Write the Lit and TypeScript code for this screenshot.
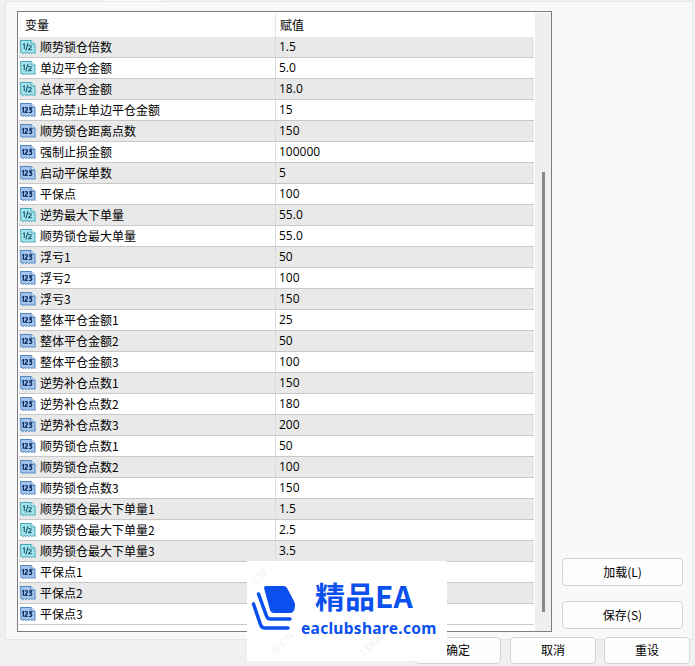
import { LitElement, html, css, svg } from "lit";
import { customElement } from "lit/decorators.js";

type Row = [string, string, "d" | "i"];
const rows: Row[] = [
  ["顺势锁仓倍数", "1.5", "d"], ["单边平仓金额", "5.0", "d"], ["总体平仓金额", "18.0", "d"],
  ["启动禁止单边平仓金额", "15", "i"], ["顺势锁仓距离点数", "150", "i"], ["强制止损金额", "100000", "i"],
  ["启动平保单数", "5", "i"], ["平保点", "100", "i"], ["逆势最大下单量", "55.0", "d"],
  ["顺势锁仓最大单量", "55.0", "d"], ["浮亏1", "50", "i"], ["浮亏2", "100", "i"], ["浮亏3", "150", "i"],
  ["整体平仓金额1", "25", "i"], ["整体平仓金额2", "50", "i"], ["整体平仓金额3", "100", "i"],
  ["逆势补仓点数1", "150", "i"], ["逆势补仓点数2", "180", "i"], ["逆势补仓点数3", "200", "i"],
  ["顺势锁仓点数1", "50", "i"], ["顺势锁仓点数2", "100", "i"], ["顺势锁仓点数3", "150", "i"],
  ["顺势锁仓最大下单量1", "1.5", "d"], ["顺势锁仓最大下单量2", "2.5", "d"], ["顺势锁仓最大下单量3", "3.5", "d"],
  ["平保点1", "", "i"], ["平保点2", "", "i"], ["平保点3", "", "i"],
];

function icon(kind: "d" | "i") {
  const d = kind === "d";
  const fill = d ? "#a6e3ea" : "#a4c6ec";
  const stroke = d ? "#45a9bd" : "#4f86c2";
  const ink = d ? "#175f78" : "#0e2f68";
  return html`<svg class="ico" width="16" height="16" viewBox="0 0 16 16">
    <path d="M.5 1.500h10.500l4 3.500v9.500l-1.500-1-1.500 1-1.500-1-1.500 1-1.500-1-1.500 1-1.500-1-1.500 1-1.500-1-.5.5z" fill="${fill}" stroke="${stroke}"/>
    <path d="M11 1.500v3.500h4" fill="#e8f6fa" stroke="${stroke}"/>
    ${d
      ? svg`<path d="M3 5.800l1.300-.8v5M8 4l-2.200 7.500M8.500 7.200c.3-1 2.800-1 2.800.4 0 1.200-2.500 1.900-2.800 3h3" fill="none" stroke="${ink}" stroke-width="1.100"/>`
      : svg`<path d="M2.200 6.500l1.200-.8v5M5 6.300c.3-.9 2.500-.9 2.500.4 0 1.100-2.100 2.300-2.500 3.700h2.700M9 5.800h2.600l-1.400 1.700c2-.1 2.100 3-.1 3-.6 0-1-.2-1.200-.5" fill="none" stroke="${ink}" stroke-width="1.300"/>`}
  </svg>`;
}

@customElement("app-root")
export class AppRoot extends LitElement {
  static styles = css`
    :host {
      display: block;
      width: 695px;
      height: 666px;
      overflow: hidden;
      position: relative;
      background: #f0f0f0;
      font-family: "Noto Sans CJK SC", "Noto Sans", sans-serif;
      font-size: 12px;
      color: #000;
    }
    .tabs { display: flex; height: 1px; padding-left: 102px; }
    .tab { width: 62px; height: 1px; background: #fbfbfb; border: solid #e2e2e2; border-width: 0 1px; box-sizing: border-box; }
    .panel {
      margin: 0 2px 0 5px;
      height: 639px;
      box-sizing: border-box;
      background: #f9f9f9;
      border: 1px solid #e5e5e5;
      padding: 9px 10px 7px 11px;
      display: flex;
      gap: 10px;
    }
    .frame {
      width: 535px;
      height: 621px;
      flex: none;
      box-sizing: border-box;
      border: 1px solid #7c7c84;
      background: #fff;
      display: flex;
      padding: 1px 0 0 1px;
    }
    .grid { width: 515px; flex: none; }
    .head { display: flex; height: 24px; background: #fff; line-height: 24px; }
    .head .c1 { width: 256px; padding-left: 6px; box-sizing: border-box; }
    .head .c2 { padding-left: 4px; border-left: 1px solid #e4e4e4; height: 24px; }
    .row { display: flex; height: 21px; box-sizing: border-box; border-bottom: 1px solid #c8c8c8; }
    .row.odd { background: #e9e9e9; }
    .c1b { width: 256px; flex: none; display: flex; gap: 4px; padding-left: 1px; box-sizing: border-box; height: 20px; white-space: nowrap; line-height: 20px; }
    .c2b { padding-left: 3px; border-left: 1px solid #dcdcdc; height: 20px; line-height: 20px; font-family: "Open Sans", "Noto Sans", sans-serif; }
    .ico { flex: none; margin-top: 2px; }
    .bar { flex: 1; background: #efefef; margin-left: 1px; display: flex; justify-content: center; padding-top: 159px; }
    .thumb { width: 3px; height: 440px; background: #8a8a8a; }
    .side { flex: 1; display: flex; flex-direction: column; gap: 15px; padding-top: 547px; }
    button {
      font: inherit;
      color: #000;
      background: #fdfdfd;
      border: 1px solid #d4d4d4;
      border-radius: 4px;
      height: 28px;
      padding: 0 0 2px;
      box-sizing: border-box;
    }
    .side button { width: 121px; }
    .foot { display: flex; justify-content: flex-end; gap: 8px; padding-right: 5px; margin-top: -3px; }
    .foot button { width: 86px; height: 27px; }
    .foot button.ok { margin-right: 1px; }
    .logo {
      position: absolute; left: 247px; top: 561px; width: 200px; height: 100px;
      background: #fff; overflow: hidden;
    }
    .logo svg { position: absolute; left: 0; top: 0; }
    .l1 { position: absolute; left: 68px; top: 14px; font-size: 30px; line-height: 40px; font-weight: 700; color: #0b50ee; white-space: nowrap; font-family: "Noto Sans CJK SC", sans-serif; }
    .l2 { position: absolute; left: 54px; top: 57px; font-size: 15.500px; line-height: 20px; font-weight: 700; color: #0b50ee; white-space: nowrap; font-family: "Noto Sans", sans-serif; letter-spacing: .3px; }
    .wm { position: absolute; font-size: 11px; color: #f6f6f6; transform: rotate(-45deg); white-space: nowrap; font-family: "Noto Sans", sans-serif; font-weight: 700; }
  `;

  render() {
    return html`
      <div class="tabs"><div class="tab"></div></div>
      <div class="panel">
        <div class="frame">
          <div class="grid">
            <div class="head"><div class="c1">变量</div><div class="c2">赋值</div></div>
            ${rows.map(
              (r, i) => html`<div class="row ${i % 2 === 0 ? "odd" : ""}">
                <div class="c1b">${icon(r[2])}<span>${r[0]}</span></div>
                <div class="c2b">${r[1]}</div>
              </div>`
            )}
          </div>
          <div class="bar"><div class="thumb"></div></div>
        </div>
        <div class="side">
          <button>加载(L)</button>
          <button>保存(S)</button>
        </div>
      </div>
      <div class="foot">
        <button class="ok">确定</button>
        <button>取消</button>
        <button>重设</button>
      </div>
      <div class="logo">
        <span class="wm" style="left:4px;top:7px">CN</span>
        <span class="wm" style="left:22px;top:74px">G.CN</span>
        <span class="wm" style="left:110px;top:74px">LOGO</span>
        <svg width="60" height="80" viewBox="0 0 60 80">
          <path d="M17 27Q17 25 19 25H37Q39 25 40 27L47.500 41Q49 44 47.500 48Q46.500 52 43 52H27Q24 52 23 49Z" fill="#0b50ee"/>
          <path d="M11.500 33L19.500 55Q20.500 58 23.500 58H43" fill="none" stroke="#0b50ee" stroke-width="3.500" stroke-linecap="round"/>
          <path d="M6.500 43L13.500 63.500Q14.500 67 18 67H41" fill="none" stroke="#0b50ee" stroke-width="3.500" stroke-linecap="round"/>
        </svg>
        <div class="l1">精品EA</div>
        <div class="l2">eaclubshare.com</div>
      </div>
    `;
  }
}
